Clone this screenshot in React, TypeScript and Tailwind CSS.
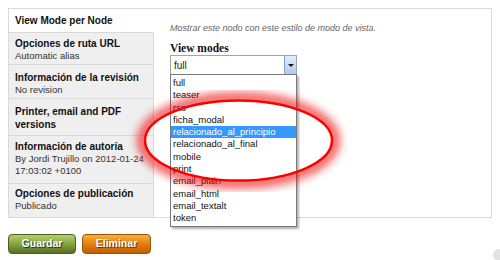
const tabs = [
  { title: ["View Mode per Node"], desc: [], h: "h-[24px]", pt: "pt-[5px]", active: true },
  { title: ["Opciones de ruta URL"], desc: ["Automatic alias"], h: "h-[32px]", pt: "pt-[4px]" },
  { title: ["Información de la revisión"], desc: ["No revision"], h: "h-[34px]", pt: "pt-[6px]" },
  { title: ["Printer, email and PDF", "versions"], desc: [], h: "h-[37px]", pt: "pt-[6px]" },
  {
    title: ["Información de autoría"],
    desc: ["By Jordi Trujillo on 2012-01-24", "17:03:02 +0100"],
    h: "h-[48px]",
    pt: "pt-[4px]",
  },
  { title: ["Opciones de publicación"], desc: ["Publicado"], h: "h-[33px]", pt: "pt-[3px]", last: true },
];

const modes = [
  "full",
  "teaser",
  "rss",
  "ficha_modal",
  "relacionado_al_principio",
  "relacionado_al_final",
  "mobile",
  "print",
  "email_plain",
  "email_html",
  "email_textalt",
  "token",
];

const App = () => {
  return (
    <div className="relative w-[500px] h-[260px] bg-white overflow-hidden font-['Liberation_Sans',Arial,sans-serif] text-[#222]">
      <div className="pt-[8px] pl-[8px]">
        <div className="flex w-[484px] h-[210px] border border-[#d9d9d9]">
          <ul className="w-[145px] shrink-0 bg-[#efefef] flex flex-col">
            {tabs.map((t, i) => (
              <li
                key={i}
                className={`${t.h} ${t.pt} px-[6px] ${t.last ? "" : "border-b"} border-[#d9d9d9] ${
                  t.active ? "bg-white" : "border-r"
                }`}
              >
                {t.title.map((l) => (
                  <div key={l} className="text-[10px] font-bold leading-[13px] text-[#111]">
                    {l}
                  </div>
                ))}
                {t.desc.map((l) => (
                  <div key={l} className="text-[9.5px] leading-[12px] text-[#333]">
                    {l}
                  </div>
                ))}
              </li>
            ))}
            <li className="flex-1 border-r border-[#d9d9d9]" />
          </ul>
          <div className="flex-1 pl-[16px] pt-[13px]">
            <p className="text-[9px] italic leading-[12px] text-[#666]">
              Mostrar este nodo con este estilo de modo de vista.
            </p>
            <div className="mt-[7px] font-['Liberation_Serif','Times_New_Roman',serif] text-[11.5px] font-bold leading-[14px] text-[#111]">
              View modes
            </div>
            <div className="relative w-[127px]">
              <div className="flex h-[20px] items-center border border-[#9ea4a9] bg-white pl-[3px] text-[10px]">
                <span className="flex-1">full</span>
                <span className="flex h-[18px] w-[12px] items-center justify-center border-l border-[#7da2ce] bg-gradient-to-b from-[#e4eefc] to-[#afc8ef]">
                  <span className="h-0 w-0 border-x-[3px] border-t-[3px] border-x-transparent border-t-[#111]" />
                </span>
              </div>
              <ul className="absolute left-0 top-[19px] z-10 w-[127px] border border-[#7a7a7a] bg-white pt-[2px] pb-[1px] shadow-[2px_2px_2px_rgba(0,0,0,0.3)]">
                {modes.map((m) => (
                  <li
                    key={m}
                    className={`h-[12.3px] pl-[2px] text-[9.5px] leading-[12.3px] ${
                      m === "relacionado_al_principio" ? "bg-[#3399ff] text-white" : "text-[#111]"
                    }`}
                  >
                    {m}
                  </li>
                ))}
              </ul>
            </div>
          </div>
        </div>
        <div className="mt-[16px] flex gap-[6px]">
          <button className="h-[20px] w-[68px] rounded-[4px] border border-[#4b6120] bg-gradient-to-b from-[#b3cf6d] via-[#86a540] to-[#566f22] text-[10.5px] font-bold text-white [text-shadow:1px_1px_1px_rgba(0,0,0,0.7)]">
            Guardar
          </button>
          <button className="h-[20px] w-[69px] rounded-[4px] border border-[#9a5200] bg-gradient-to-b from-[#f7b13c] via-[#e57f10] to-[#c15d00] text-[10.5px] font-bold text-white [text-shadow:1px_1px_1px_rgba(0,0,0,0.6)]">
            Eliminar
          </button>
        </div>
      </div>
      <span className="absolute left-[493px] top-[249px] h-[12px] w-[12px] rounded-full bg-[#e2e2e2]" />
      <svg className="pointer-events-none absolute inset-0 z-20" width="500" height="260">
        <defs>
          <filter id="glow" x="-30%" y="-60%" width="160%" height="220%">
            <feGaussianBlur stdDeviation="4.5" />
          </filter>
          <mask id="outside">
            <rect width="500" height="260" fill="white" />
            <ellipse cx="238.5" cy="140.5" rx="93.5" ry="40" fill="black" />
          </mask>
        </defs>
        <g mask="url(#outside)">
          <ellipse
            cx="238.5"
            cy="140.5"
            rx="96"
            ry="42.5"
            fill="none"
            stroke="rgba(235,0,0,0.6)"
            strokeWidth="12"
            filter="url(#glow)"
          />
        </g>
        <ellipse cx="238.5" cy="140.5" rx="93.5" ry="40" fill="none" stroke="#ff0000" strokeWidth="2.5" />
      </svg>
    </div>
  );
};

export default App;
